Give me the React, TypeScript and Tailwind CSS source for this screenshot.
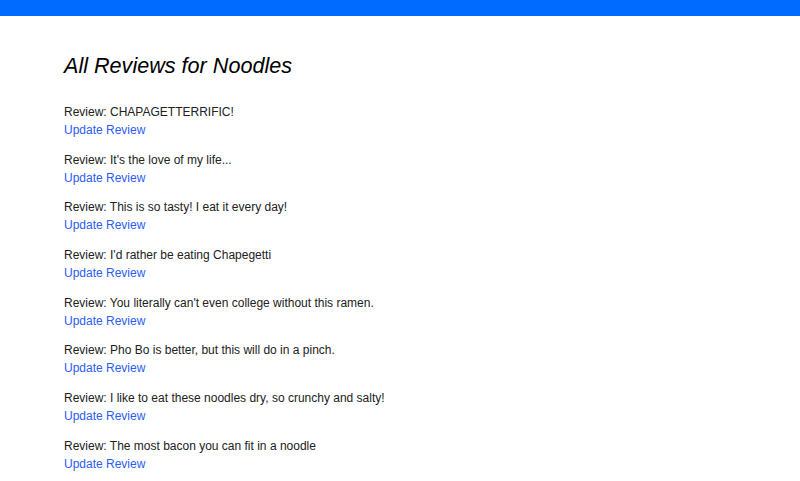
const reviews = [
  "CHAPAGETTERRIFIC!",
  "It's the love of my life...",
  "This is so tasty! I eat it every day!",
  "I'd rather be eating Chapegetti",
  "You literally can't even college without this ramen.",
  "Pho Bo is better, but this will do in a pinch.",
  "I like to eat these noodles dry, so crunchy and salty!",
  "The most bacon you can fit in a noodle",
];

export default function App() {
  return (
    <div className="min-h-[481px] bg-white" style={{ fontFamily: "'Liberation Sans', Arial, sans-serif" }}>
      <div className="h-4 bg-[#006bff]" />
      <div className="px-16 pt-[37px]">
        <h1 className="text-[21.6px] leading-[26px] italic text-black">All Reviews for Noodles</h1>
        <div className="mt-[24px] flex flex-col gap-[11.7px]">
          {reviews.map((r) => (
            <div key={r} className="text-[12px] leading-[18px]">
              <div className="text-[#212121]">Review: {r}</div>
              <a href="#" className="text-[#2b5cf5]">Update Review</a>
            </div>
          ))}
        </div>
      </div>
    </div>
  );
}
